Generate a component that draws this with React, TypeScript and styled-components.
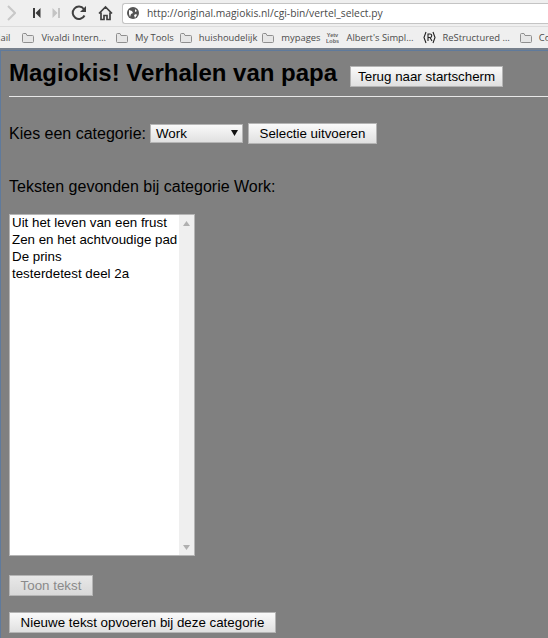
import React from "react";
import styled, { createGlobalStyle } from "styled-components";

const Global = createGlobalStyle`
  html, body { margin: 0; padding: 0; width: 548px; height: 638px; overflow: hidden; background: #808080; }
  * { box-sizing: border-box; }
`;

const Shell = styled.div`
  width: 548px;
  height: 638px;
  overflow: hidden;
  display: flex;
  flex-direction: column;
  background: #808080;
  font-family: "Liberation Sans", Arial, sans-serif;
`;

const Toolbar = styled.div`
  height: 27px;
  flex: none;
  display: flex;
  align-items: center;
  background: #efefef;
  border-bottom: 1px solid #dcdcdc;
  padding: 0 0 0 7px;
`;

const NavIcon = styled.svg<{ $w: number; $ml: number }>`
  flex: none;
  width: ${(p) => p.$w}px;
  height: 16px;
  margin-left: ${(p) => p.$ml}px;
`;

const Address = styled.div`
  flex: none;
  width: 426px;
  margin-left: 9px;
  height: 21px;
  display: flex;
  align-items: center;
  background: #fff;
  border: 1px solid #c4c4c4;
  border-radius: 3px 0 0 3px;
  border-right: none;
  padding-left: 4px;
  font-family: "Open Sans", sans-serif;
  font-size: 10.3px;
  color: #4a4a4a;
`;

const BookmarkBar = styled.div`
  height: 21px;
  flex: none;
  display: flex;
  align-items: center;
  background: #efefef;
  white-space: nowrap;
  overflow: hidden;
  font-family: "Open Sans", sans-serif;
  font-size: 9.4px;
  color: #4c4c4c;
`;

const Bookmark = styled.span<{ $ml: number }>`
  flex: none;
  display: flex;
  align-items: center;
  gap: 7px;
  margin-left: ${(p) => p.$ml}px;
`;

const Divider = styled.div`
  height: 2px;
  flex: none;
  background: #77808c;
`;

const Page = styled.main`
  flex: 1;
  padding: 0 0 0 8px;
  color: #000;
  border-top: 1px solid #5f7a9c;
  border-left: 1px solid #5f7a9c;
`;

const Header = styled.div`
  display: flex;
  align-items: flex-start;
  height: 45px;
  padding-top: 8px;
`;

const Title = styled.h1`
  margin: 0;
  font-size: 24px;
  font-weight: bold;
  line-height: 28px;
`;

const Button = styled.button<{ $w: number }>`
  flex: none;
  width: ${(p) => p.$w}px;
  height: 21px;
  padding: 0;
  display: block;
  font-family: "Liberation Sans", Arial, sans-serif;
  font-size: 13.33px;
  color: #000;
  background: linear-gradient(#fafafa, #e0e0e0);
  border: 1px solid #b5b5b5;
  border-radius: 0;
  &:disabled { color: #8a8a8a; background: linear-gradient(#e8e8e8, #d8d8d8); }
`;

const HeaderButton = styled(Button)`
  margin: 7px 0 0 13px;
`;

const Rule = styled.hr`
  margin: 0;
  height: 1px;
  border: 0;
  background: #e8e8e8;
`;

const CategoryRow = styled.div`
  display: flex;
  align-items: center;
  margin-top: 26px;
  height: 21px;
  font-size: 16px;
`;

const FakeSelect = styled.div`
  flex: none;
  width: 93px;
  height: 19px;
  margin-left: 4px;
  margin-right: 5px;
  padding-left: 5px;
  position: relative;
  display: flex;
  align-items: center;
  font-size: 13.33px;
  background: linear-gradient(#fafafa, #e0e0e0);
  border: 1px solid #b5b5b5;
`;

const Caret = styled.svg`
  position: absolute;
  right: 4px;
  top: 4px;
  width: 7px;
  height: 7px;
`;

const Found = styled.p`
  margin: 33px 0 0 0;
  font-size: 16px;
  line-height: 19px;
`;

const ListBox = styled.div`
  width: 186px;
  height: 342px;
  margin-top: 18px;
  display: flex;
  background: #fff;
  border: 1px solid #b5b5b5;
`;

const Items = styled.div`
  flex: 1;
  margin-top: -1px;
  padding: 0 0 0 2px;
  font-size: 13.33px;
  line-height: 17px;
`;

const ScrollTrack = styled.div`
  flex: none;
  width: 15px;
  display: flex;
  flex-direction: column;
  justify-content: space-between;
  align-items: center;
  padding: 6px 0 5px;
  background: #efefef;
`;

const Arrow = styled.svg`
  width: 7px;
  height: 5px;
`;

const ActionRow = styled.div<{ $mt: number }>`
  margin-top: ${(p) => p.$mt}px;
`;

const Folder = () => (
  <svg width="12" height="10" viewBox="0 0 12 10" fill="#e6e6e6" stroke="#8f8f8f" strokeWidth="1" style={{ flex: "none" }}>
    <path d="M.5 1.500v7a1 1 0 0 0 1 1h9a1 1 0 0 0 1-1v-5a1 1 0 0 0-1-1H5L4 .5H1.500a1 1 0 0 0-1 1z" />
  </svg>
);

export default function App() {
  return (
    <Shell>
      <Global />
      <Toolbar>
        <NavIcon $w={9} $ml={0} viewBox="0 0 9 16"><path d="M1 1l7 7-7 7" fill="none" stroke="#c8c8c8" strokeWidth="2" /></NavIcon>
        <NavIcon $w={9} $ml={16} viewBox="0 0 9 16"><path d="M1 3h2v10H1zM8.500 3v10L3.500 8z" fill="#3c3c3c" /></NavIcon>
        <NavIcon $w={9} $ml={11} viewBox="0 0 9 16"><path d="M8 3H6v10h2zM.5 3v10l5-5z" fill="#c4c4c4" /></NavIcon>
        <NavIcon $w={16} $ml={10} viewBox="0 0 16 16">
          <path d="M13.500 10.500A6.200 6.200 0 1 1 12.800 4" fill="none" stroke="#404040" strokeWidth="2" />
          <path d="M15 1v6H9z" fill="#404040" />
        </NavIcon>
        <NavIcon $w={15} $ml={11} viewBox="0 0 15 16">
          <path d="M1 8.500 7.500 2 14 8.500M3 7.500V14.500h3v-4h3v4h3V7.500" fill="none" stroke="#404040" strokeWidth="1.700" />
        </NavIcon>
        <Address>
          <svg width="12" height="12" viewBox="0 0 12 12" style={{ marginRight: 8, flex: "none" }}>
            <circle cx="6" cy="6" r="6" fill="#555" />
            <path d="M2 3l3 1 1 2-2 1-1 3-1-3zM8 2l2 2-2 1zM7 8l2-1 1 1-2 3z" fill="#fff" />
          </svg>
          http://original.magiokis.nl/cgi-bin/vertel_select.py
        </Address>
      </Toolbar>
      <BookmarkBar>
        <Bookmark $ml={-8}>Mail</Bookmark>
        <Bookmark $ml={12}><Folder />Vivaldi Intern…</Bookmark>
        <Bookmark $ml={10}><Folder />My Tools</Bookmark>
        <Bookmark $ml={6}><Folder />huishoudelijk</Bookmark>
        <Bookmark $ml={5}><Folder />mypages</Bookmark>
        <Bookmark $ml={6}>
          <svg width="13" height="13" viewBox="0 0 13 13" style={{ flex: "none" }}>
            <text x="6.500" y="5.500" textAnchor="middle" fontFamily="Liberation Sans" fontSize="5.500" fontWeight="bold" fill="#666">Yetv</text>
            <text x="6.500" y="11.500" textAnchor="middle" fontFamily="Liberation Sans" fontSize="5.500" fontWeight="bold" fill="#666">Lobs</text>
          </svg>
          Albert's Simpl…
        </Bookmark>
        <Bookmark $ml={9}>
          <svg width="13" height="13" viewBox="0 0 13 13" style={{ flex: "none" }}>
            <path d="M3 1 1 6.500 3 12M10 1l2 5.500L10 12M5 10V3h2a1.700 1.700 0 0 1 0 3.500H5M7 6.500 9 10" fill="none" stroke="#222" strokeWidth="1.100" />
          </svg>
          ReStructured …
        </Bookmark>
        <Bookmark $ml={10}><Folder />Co</Bookmark>
      </BookmarkBar>
      <Divider />
      <Page>
        <Header>
          <Title>Magiokis! Verhalen van papa</Title>
          <HeaderButton $w={153}>Terug naar startscherm</HeaderButton>
        </Header>
        <Rule />
        <CategoryRow>
          Kies een categorie:
          <FakeSelect>
            Work
            <Caret viewBox="0 0 7 7"><path d="M0 1h7L3.500 7z" fill="#111" /></Caret>
          </FakeSelect>
          <Button $w={129}>Selectie uitvoeren</Button>
        </CategoryRow>
        <Found>Teksten gevonden bij categorie Work:</Found>
        <ListBox>
          <Items>
            <div>Uit het leven van een frust</div>
            <div>Zen en het achtvoudige pad</div>
            <div>De prins</div>
            <div>testerdetest deel 2a</div>
          </Items>
          <ScrollTrack>
            <Arrow viewBox="0 0 7 5"><path d="M3.500 0 7 5H0z" fill="#b0b0b0" /></Arrow>
            <Arrow viewBox="0 0 7 5"><path d="M0 0h7L3.500 5z" fill="#b0b0b0" /></Arrow>
          </ScrollTrack>
        </ListBox>
        <ActionRow $mt={19}><Button $w={84} disabled>Toon tekst</Button></ActionRow>
        <ActionRow $mt={16}><Button $w={267}>Nieuwe tekst opvoeren bij deze categorie</Button></ActionRow>
      </Page>
    </Shell>
  );
}
